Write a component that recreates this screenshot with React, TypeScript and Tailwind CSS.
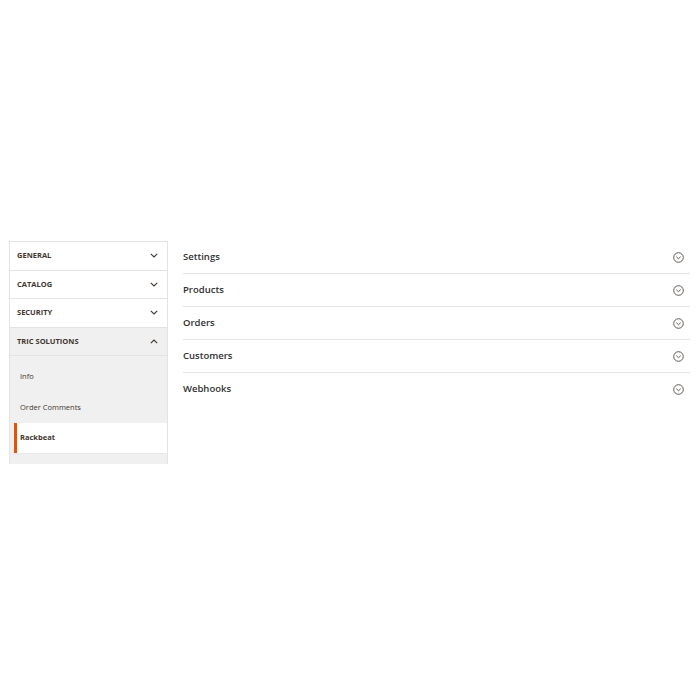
import React from "react";

const font = { fontFamily: '"Open Sans", "Noto Sans", sans-serif' };

function Chevron({ up }: { up?: boolean }) {
  return (
    <svg width="8" height="5" viewBox="0 0 8 5" className="shrink-0">
      <path
        d={up ? "M0.8 4.2 L4 1 L7.2 4.2" : "M0.8 0.8 L4 4 L7.2 0.8"}
        fill="none"
        stroke="#41362f"
        strokeWidth="1.1"
      />
    </svg>
  );
}

function CircleChevron() {
  return (
    <svg width="11" height="11" viewBox="0 0 11 11" className="shrink-0">
      <circle cx="5.5" cy="5.5" r="4.8" fill="none" stroke="#514943" strokeWidth="0.9" />
      <path d="M3.3 4.7 L5.5 6.7 L7.7 4.7" fill="none" stroke="#514943" strokeWidth="0.9" />
    </svg>
  );
}

const groups = ["GENERAL", "CATALOG", "SECURITY"];
const sections = ["Settings", "Products", "Orders", "Customers", "Webhooks"];

export default function App() {
  return (
    <div className="w-[700px] h-[700px] bg-white text-[#303030]" style={font}>
      <div className="flex pt-[241px] pl-[9px] pr-[10px]">
        <div className="w-[159px] h-[223px] overflow-hidden border border-[#e3e3e3] border-b-0 shrink-0">
          {groups.map((g) => (
            <div
              key={g}
              className="h-[28.5px] border-b border-[#e3e3e3] flex items-center justify-between pl-[7px] pr-[9px]"
            >
              <span className="text-[7.5px] font-bold text-[#41362f]">{g}</span>
              <Chevron />
            </div>
          ))}
          <div className="h-[28.5px] bg-[#f0f0f0] border-b border-[#e3e3e3] flex items-center justify-between pl-[7px] pr-[9px]">
            <span className="text-[7.5px] font-bold text-[#41362f]">TRIC SOLUTIONS</span>
            <Chevron up />
          </div>
          <div className="bg-[#f0f0f0] pt-[5.5px] pl-[4px]">
            <div className="h-[30.5px] flex items-center pl-[6px] text-[7.5px] text-[#41362f]">Info</div>
            <div className="h-[30.5px] flex items-center pl-[6px] text-[7.5px] text-[#41362f]">Order Comments</div>
            <div className="h-[30.5px] flex items-center bg-white border-l-[3px] border-[#eb5202] pl-[3px] text-[7.5px] font-bold text-[#41362f]">
              Rackbeat
            </div>
            <div className="h-[30.5px] border-t border-[#e8e8e8]" />
          </div>
        </div>
        <div className="flex-1 ml-[15px]">
          {sections.map((s, i) => (
            <div
              key={s}
              className={
                "h-[33px] flex items-center justify-between pr-[6px] " +
                (i < sections.length - 1 ? "border-b border-[#e3e3e3]" : "")
              }
            >
              <span className="text-[9.5px] font-semibold text-[#303030]">{s}</span>
              <CircleChevron />
            </div>
          ))}
        </div>
      </div>
    </div>
  );
}
